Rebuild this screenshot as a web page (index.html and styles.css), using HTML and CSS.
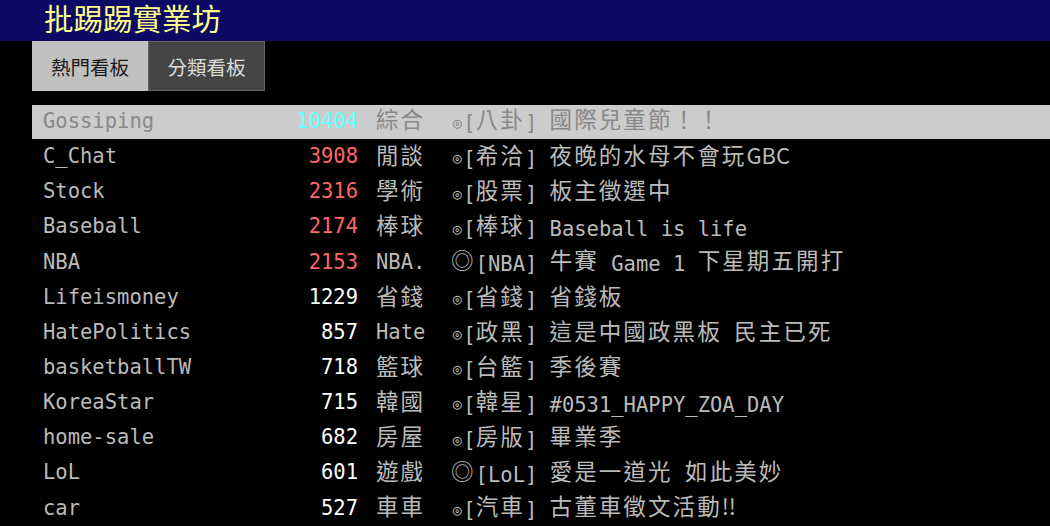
FILE: index.html
```html
<!DOCTYPE html>
<html lang="zh-Hant">
<head>
<meta charset="utf-8">
<title>批踢踢實業坊</title>
<link rel="stylesheet" href="styles.css">
</head>
<body>
<div class="topbar"><span class="brand">批踢踢實業坊</span></div>
<div class="tabs">
  <div class="tab active">熱門看板</div>
  <div class="tab">分類看板</div>
</div>
<div class="boards">
  <div class="row hl"><span class="name">Gossiping</span><span class="num cyan">10404</span><span class="cls"><span class="w">綜合</span></span><span class="title"><span class="o">◎</span>[<span class="w">八卦</span>] <span class="w">國際兒童節！！</span></span></div>
  <div class="row"><span class="name">C_Chat</span><span class="num red">3908</span><span class="cls"><span class="w">閒談</span></span><span class="title"><span class="o">◎</span>[<span class="w">希洽</span>] <span class="w">夜晚的水母不會玩</span><span class="p">GBC</span></span></div>
  <div class="row"><span class="name">Stock</span><span class="num red">2316</span><span class="cls"><span class="w">學術</span></span><span class="title"><span class="o">◎</span>[<span class="w">股票</span>] <span class="w">板主徵選中</span></span></div>
  <div class="row"><span class="name">Baseball</span><span class="num red">2174</span><span class="cls"><span class="w">棒球</span></span><span class="title"><span class="o">◎</span>[<span class="w">棒球</span>] Baseball is life</span></div>
  <div class="row"><span class="name">NBA</span><span class="num red">2153</span><span class="cls">NBA.</span><span class="title"><span class="w">◎</span>[NBA] <span class="w">牛賽</span> Game 1 <span class="w">下星期五開打</span></span></div>
  <div class="row"><span class="name">Lifeismoney</span><span class="num white">1229</span><span class="cls"><span class="w">省錢</span></span><span class="title"><span class="o">◎</span>[<span class="w">省錢</span>] <span class="w">省錢板</span></span></div>
  <div class="row"><span class="name">HatePolitics</span><span class="num white">857</span><span class="cls">Hate</span><span class="title"><span class="o">◎</span>[<span class="w">政黑</span>] <span class="w">這是中國政黑板</span> <span class="w">民主已死</span></span></div>
  <div class="row"><span class="name">basketballTW</span><span class="num white">718</span><span class="cls"><span class="w">籃球</span></span><span class="title"><span class="o">◎</span>[<span class="w">台籃</span>] <span class="w">季後賽</span></span></div>
  <div class="row"><span class="name">KoreaStar</span><span class="num white">715</span><span class="cls"><span class="w">韓國</span></span><span class="title"><span class="o">◎</span>[<span class="w">韓星</span>] #0531_HAPPY_ZOA_DAY</span></div>
  <div class="row"><span class="name">home-sale</span><span class="num white">682</span><span class="cls"><span class="w">房屋</span></span><span class="title"><span class="o">◎</span>[<span class="w">房版</span>] <span class="w">畢業季</span></span></div>
  <div class="row"><span class="name">LoL</span><span class="num white">601</span><span class="cls"><span class="w">遊戲</span></span><span class="title"><span class="w">◎</span>[LoL] <span class="w">愛是一道光</span> <span class="w">如此美妙</span></span></div>
  <div class="row"><span class="name">car</span><span class="num white">527</span><span class="cls"><span class="w">車車</span></span><span class="title"><span class="o">◎</span>[<span class="w">汽車</span>] <span class="w">古董車徵文活動</span><span class="p">!!</span></span></div>
</div>
</body>
</html>
```
FILE: styles.css
```css
html, body {
  margin: 0;
  padding: 0;
  background: #000;
}
body {
  font-family: "DejaVu Sans Mono", "Liberation Mono", "Noto Sans CJK TC", monospace;
  font-size: 20.5px;
  color: #bbb;
  overflow: hidden;
}
.topbar {
  height: 41px;
  background: #0d0a66;
  padding-left: 44px;
  box-sizing: border-box;
}
.brand {
  display: block;
  font-family: "Noto Sans CJK TC", sans-serif;
  font-size: 29.5px;
  color: #ffff8a;
  line-height: 35px;
}
.tabs {
  display: flex;
  margin-left: 32px;
  height: 50px;
}
.tab {
  width: 117px;
  box-sizing: border-box;
  display: flex;
  align-items: center;
  justify-content: center;
  font-family: "Noto Sans CJK TC", sans-serif;
  font-size: 19.5px;
  background: #444;
  color: #ddd;
  border: 1px solid #666;
}
.tab.active {
  width: 116px;
  background: #c0c0c0;
  color: #1a1a1a;
  border-color: #c0c0c0;
}
.boards {
  margin-top: 14px;
  margin-left: 32px;
}
.row {
  height: 35.15px;
  box-sizing: border-box;
  padding-bottom: 3px;
  display: flex;
  align-items: center;
  padding-left: 11px;
  white-space: pre;
  line-height: 26px;
}
.row.hl {
  background: #cccccc;
  color: #888;
  height: 34px;
  margin-bottom: 1.15px;
}
.name {
  width: 235px;
  flex: none;
}
.num {
  width: 80px;
  flex: none;
  text-align: right;
}
.red { color: #ff6666; }
.white { color: #ffffff; }
.cyan { color: #66ffff; }
.cls {
  margin-left: 18px;
  width: 75px;
  flex: none;
}
.w {
  font-family: "Noto Sans CJK TC", sans-serif;
  font-size: 22.5px;
  letter-spacing: 2.1px;
  vertical-align: 1.5px;
}
.o {
  display: inline-block;
  width: 12.34px;
  font-size: 15px;
  text-align: center;
  vertical-align: 2px;
}
.p {
  font-family: "Noto Sans CJK TC", sans-serif;
  font-size: 22px;
  vertical-align: 1.5px;
}
```
